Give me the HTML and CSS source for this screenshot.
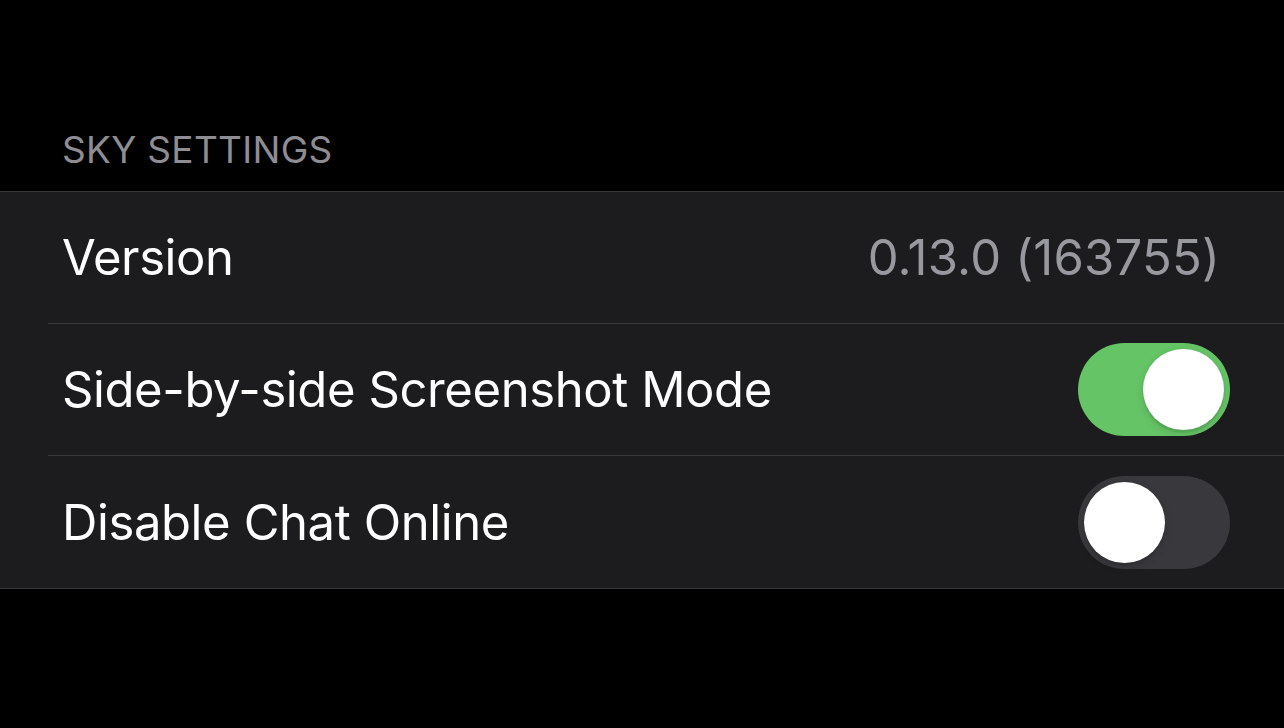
FILE: index.html
```html
<!DOCTYPE html>
<html lang="en">
<head>
    <meta charset="UTF-8">
    <meta name="viewport" content="width=device-width, initial-scale=1.0">
    <title>Sky Settings</title>
    <link rel="stylesheet" href="styles.css">
</head>
<body>

<div class="section-header">SKY SETTINGS</div>

<div class="group">
    <div class="row">
        <span class="label">Version</span>
        <span class="value">0.13.0 (163755)</span>
    </div>
    <div class="row">
        <span class="label">Side-by-side Screenshot Mode</span>
        <div class="toggle on"><div class="knob"></div></div>
    </div>
    <div class="row">
        <span class="label">Disable Chat Online</span>
        <div class="toggle"><div class="knob"></div></div>
    </div>
</div>

</body>
</html>
```

FILE: styles.css
```css
body {
    font-family: Inter, "Noto Sans", sans-serif;
    margin: 0;
    padding: 0;
    background-color: #000;
    color: #fff;
}

.section-header {
    padding: 128px 0 0 62px;
    height: 191px;
    box-sizing: border-box;
    font-size: 37px;
    line-height: 44px;
    color: #8d8d93;
    letter-spacing: 0.3px;
}

.group {
    background-color: #1c1c1e;
    border-top: 1px solid #38383a;
    border-bottom: 1px solid #38383a;
}

.row {
    margin-left: 48px;
    padding: 0 54px 0 14px;
    height: 131px;
    display: flex;
    align-items: center;
    justify-content: space-between;
    border-bottom: 1px solid #38383a;
}

.row:last-child {
    border-bottom: none;
    height: 132px;
}

.label {
    font-size: 49px;
    letter-spacing: -0.4px;
}

.value {
    font-size: 49px;
    color: #98989f;
    margin-right: 10px;
    letter-spacing: 0.2px;
}

.toggle {
    width: 152px;
    height: 93px;
    border-radius: 47px;
    background-color: #39393d;
    display: flex;
    align-items: center;
    padding: 0 6px;
    box-sizing: border-box;
}

.toggle.on {
    background-color: #65c466;
    justify-content: flex-end;
}

.knob {
    width: 81px;
    height: 81px;
    border-radius: 50%;
    background-color: #fff;
    box-shadow: 0 3px 8px rgba(0, 0, 0, 0.15), 0 3px 1px rgba(0, 0, 0, 0.06);
}
```
